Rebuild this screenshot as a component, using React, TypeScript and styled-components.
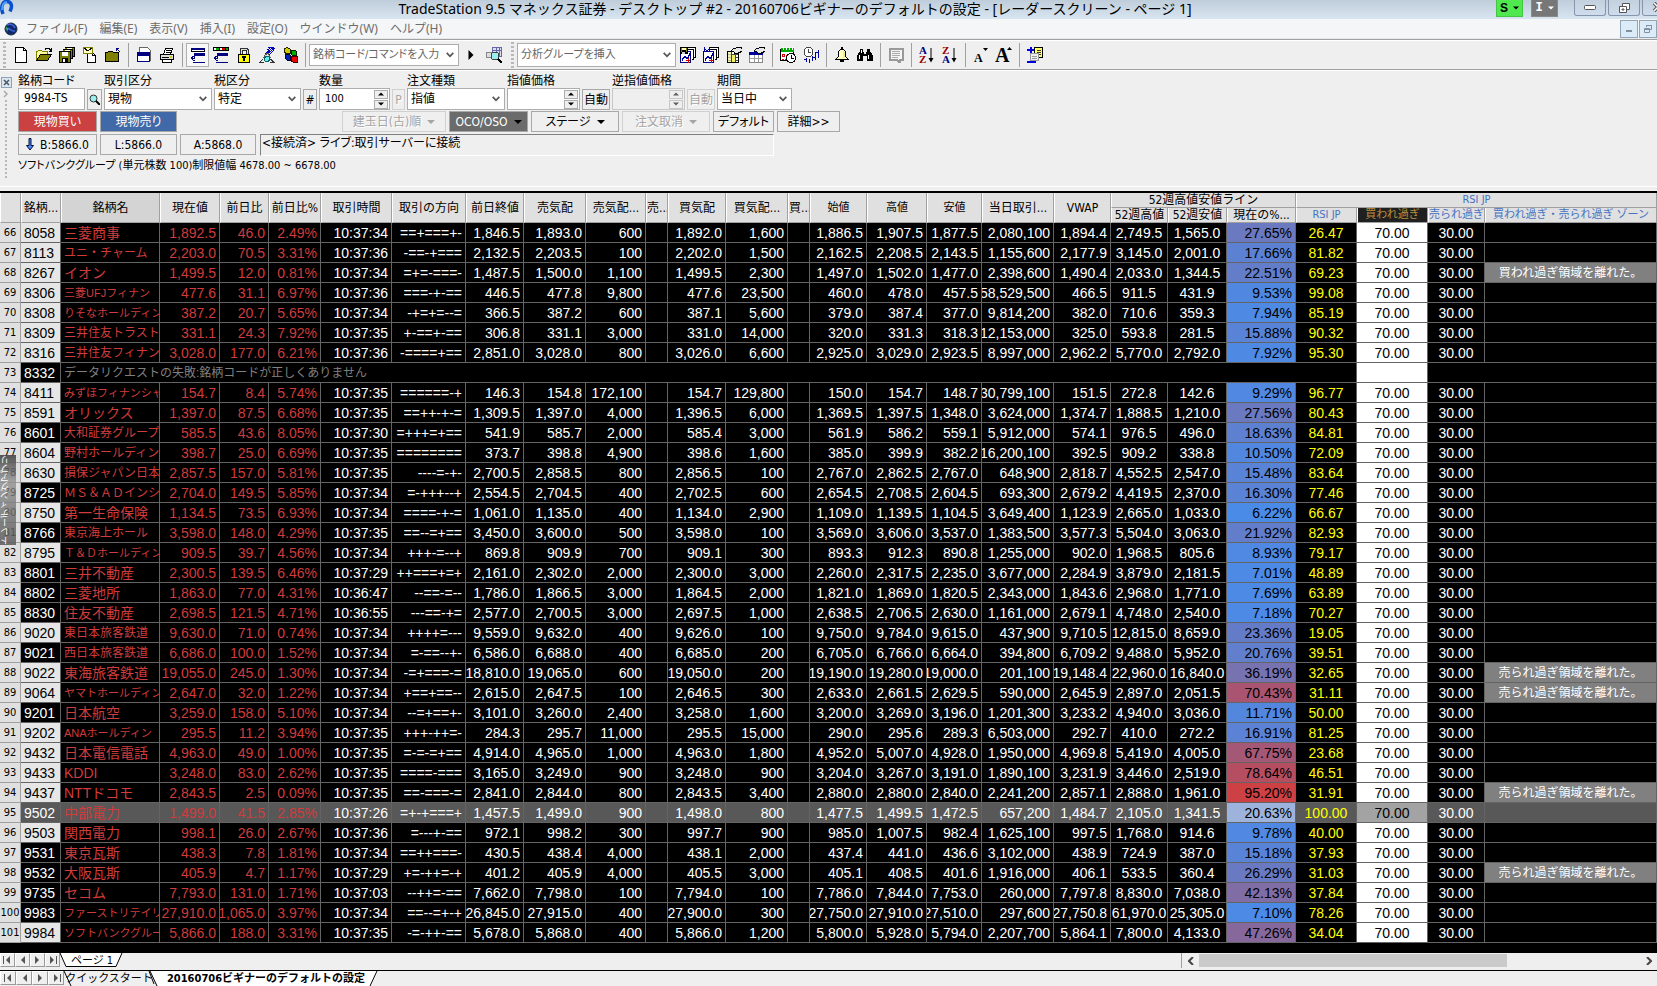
import React from 'react';
import styled, { createGlobalStyle, css } from 'styled-components';

const UI = '"DejaVu Sans Condensed", "Noto Sans", "Noto Sans CJK JP", sans-serif';
const GRID = '"Liberation Sans", "Noto Sans CJK JP", sans-serif';
const TITLE = '"Noto Sans", "Noto Sans CJK JP", sans-serif';

const GlobalStyle = createGlobalStyle`
  * { box-sizing: border-box; }
  body { margin: 0; background: #efefef; overflow: hidden; }
  button, input, select { font: inherit; color: inherit; margin: 0; padding: 0; border-radius: 0; }
`;

const Page = styled.div`
  display: flex;
  flex-direction: column;
  min-height: 100vh;
  font: 12px/14px ${UI};
  font-feature-settings: "palt";
  color: #000;
  white-space: nowrap;
`;

/* ---------- title and menu ---------- */

const TitleBar = styled.header`
  display: flex;
  align-items: flex-start;
  height: 19px;
  background: linear-gradient(#bfcddb, #d8e5f1);
`;

const Title = styled.h1`
  flex: 1;
  margin: 0;
  padding-left: 80px;
  text-align: center;
  font: 14px/18px ${TITLE};
`;

const BadgeButton = styled.button<{ $green?: boolean }>`
  display: flex;
  align-items: center;
  justify-content: center;
  gap: 5px;
  width: 27px;
  height: 17px;
  margin-right: 8px;
  border: 1px solid ${p => (p.$green ? '#45c545' : '#8a8a8a')};
  border-top: 0;
  background: ${p => (p.$green ? '#4fe84f' : '#777')};
  color: ${p => (p.$green ? '#000' : '#fff')};
  font: bold 12px/14px ${p => (p.$green ? GRID : '"Liberation Mono", monospace')};
`;

const WindowButtons = styled.div`
  display: flex;
  gap: 2px;
  margin-left: 8px;
  width: 83px;
  overflow: hidden;
`;

const WindowButton = styled.button`
  flex: none;
  width: 32px;
  height: 16px;
  border: 1px solid #8496ae;
  border-top: 0;
  border-radius: 0 0 3px 3px;
  background: linear-gradient(#c3d0de, #cfdceb);
  line-height: 0;
`;

const MenuBar = styled.nav`
  display: flex;
  align-items: center;
  height: 20px;
  padding-left: 4px;
  background: #f4f6f8;
  border-bottom: 1px solid #e6e9ea;
`;

const MenuLogo = styled.svg`
  margin-right: 8px;
`;

const MenuItem = styled.button`
  border: 0;
  background: none;
  margin-right: 12px;
  color: #6d6d6d;
  font: 12px/18px ${TITLE};
`;

const MdiButtons = styled.div`
  display: flex;
  gap: 1px;
  margin-left: auto;
`;

const MdiButton = styled.button`
  width: 18px;
  height: 18px;
  border: 1px solid #93a4b5;
  background: #dcebf8;
  line-height: 0;
`;

/* ---------- tool bar ---------- */

const ToolBar = styled.div`
  display: flex;
  align-items: center;
  height: 31px;
  border-top: 1px solid #a0a0a0;
  border-bottom: 1px solid #a0a0a0;
  box-shadow: inset 0 1px #fff, 0 1px #fff;
`;

const Grip = styled.span`
  width: 3px;
  height: 26px;
  margin: 0 3px;
  background: repeating-linear-gradient(#b8b8b8 0 2px, transparent 2px 4px);
`;

const ToolButton = styled.button<{ $on?: boolean }>`
  flex: none;
  display: flex;
  align-items: center;
  justify-content: center;
  width: 23px;
  height: 24px;
  border: 1px solid ${p => (p.$on ? '#b0b0b0' : 'transparent')};
  background: ${p => (p.$on ? '#f8f8f8' : 'none')};
`;

const Divider = styled.span`
  width: 8px;
  height: 24px;
  background: linear-gradient(#a0a0a0, #a0a0a0) center / 1px 100% no-repeat;
`;

const SelectWrap = styled.span<{ $w: number; $h: number; $tool?: boolean }>`
  position: relative;
  display: inline-block;
  width: ${p => p.$w}px;
  height: ${p => p.$h}px;
  color: ${p => (p.$tool ? '#666' : '#000')};
  font-size: ${p => (p.$tool ? 11 : 12)}px;
  svg { position: absolute; right: 5px; top: 50%; margin-top: -3px; pointer-events: none; }
`;

const SelectBox = styled.select`
  appearance: none;
  width: 100%;
  height: 100%;
  padding-left: 3px;
  border: 1px solid #adadad;
  background: #fff;
`;

/* ---------- order bar ---------- */

const OrderBar = styled.section`
  display: flex;
  height: 117px;
  border-bottom: 1px solid #fff;
  padding-top: 3px;
`;

const OrderHandle = styled.div`
  display: flex;
  flex-direction: column;
  align-items: center;
  gap: 2px;
  width: 12px;
  margin-right: 6px;
  padding-top: 4px;
  color: #a8a8a8;
`;

const CloseButton = styled.button`
  width: 11px;
  height: 11px;
  border: 1px solid #8da3b8;
  background: #dce6ee;
  line-height: 0;
`;

const HandleDots = styled.span`
  width: 2px;
  height: 78px;
  background: repeating-linear-gradient(#b8b8b8 0 2px, transparent 2px 4px);
`;

const OrderForm = styled.form`
  display: flex;
  flex-direction: column;
`;

const Fields = styled.div`
  display: flex;
  align-items: flex-end;
  gap: 2px;
  height: 37px;
`;

const Field = styled.label<{ $w: number }>`
  display: flex;
  flex-direction: column;
  width: ${p => p.$w}px;
`;

const TextBox = styled.input`
  width: 100%;
  height: 22px;
  padding: 0 5px 3px;
  border: 1px solid #adadad;
  background: #fff;
  font-size: 12px;
`;

const Spinner = styled.span<{ $off?: boolean }>`
  display: flex;
  align-items: center;
  height: 22px;
  border: 1px solid #adadad;
  padding-right: 1px;
  background: ${p => (p.$off ? '#efefef' : '#fff')};
  opacity: ${p => (p.$off ? 0.6 : 1)};
  input { flex: 1; min-width: 0; height: 18px; border: 0; background: none; padding: 0 5px 2px; font-size: 11px; }
`;

const SpinButtons = styled.span`
  display: flex;
  flex-direction: column;
  gap: 1px;
  button { display: flex; align-items: center; justify-content: center; width: 14px; height: 9px; border: 1px solid #adadad; background: #efefef; }
`;

const ButtonRow = styled.div`
  display: flex;
  gap: 3px;
  margin-top: 1px;
  height: 22px;
`;

const Space = styled.span<{ $w: number }>`
  width: ${p => p.$w}px;
`;

const PushButton = styled.button<{ $w: number; $tone?: 'red' | 'blue' | 'dark' }>`
  flex: none;
  display: flex;
  align-items: center;
  justify-content: center;
  gap: 6px;
  width: ${p => p.$w}px;
  height: 21px;
  border: 1px solid #a8a8a8;
  background: #efefef;
  &:disabled { color: #a5a5a5; border-color: #d0d0d0; text-shadow: 1px 1px #fff; }
  ${p => p.$tone && css`color: #fff; background: ${{ red: '#cb4040', blue: '#4169a8', dark: '#6b6b6b' }[p.$tone]};`}
`;

const Status = styled.output`
  width: 514px;
  margin-left: 1px;
  padding: 1px;
  border: 1px solid #fff;
  border-top-color: #808080;
  border-left-color: #808080;
`;

const Issue = styled.p`
  margin: 3px 0 0;
  font-size: 11px;
`;

/* ---------- radar screen grid ---------- */

const GridArea = styled.main`
  position: relative;
  margin-top: 4px;
  border-top: 2px solid #000;
  padding-bottom: 10px;
  background: #000;
`;

const GridTable = styled.table`
  width: 100%;
  table-layout: fixed;
  border-collapse: separate;
  border-spacing: 0;
`;

const Head = styled.th<{ $tone?: 'blue' | 'dark' | 'shade'; $small?: boolean }>`
  height: 15px;
  padding: 0;
  overflow: hidden;
  border-left: 1px solid #fff;
  border-right: 1px solid #a0a0a0;
  border-bottom: 1px solid #a0a0a0;
  background: #e0e0e0;
  font: ${p => (p.$small ? 11 : 12)}px/14px ${UI};
  ${p => p.$tone === 'blue' && css`color: #4472c4;`}
  ${p => p.$tone === 'shade' && css`background: #d4d4d4;`}
  ${p => p.$tone === 'dark' && css`color: #bb913c; background: #202020;`}
`;

const RowNumber = styled.th`
  height: 20px;
  padding: 0;
  border-right: 1px solid #a0a0a0;
  border-bottom: 1px solid #a0a0a0;
  background: #e0e0e0;
  font: 11px/19px ${UI};
  text-align: center;
`;

type Tone = 'red' | 'yellow' | 'ink' | 'gray' | 'plain';
const toneColors: Record<Tone, string> = { red: '#d03c3c', yellow: '#ff0', ink: '#000', gray: '#808080', plain: '#fff' };

const Cell = styled.td<{ $tone?: Tone; $bg?: string; $selected?: boolean }>`
  height: 20px;
  padding: 0;
  border-right: 1px solid #646464;
  border-bottom: 1px solid #646464;
  color: ${p => toneColors[p.$tone ?? 'plain']};
  background: ${p => p.$bg ?? (p.$selected ? '#585858' : '#000')};
  font: 14px/20px ${GRID};
`;

const Value = styled.div<{ $align: string; $size?: number }>`
  display: flex;
  justify-content: ${p => p.$align};
  height: 19px;
  padding: 0 3px;
  overflow: hidden;
  font-size: ${p => p.$size ?? 14}px;
`;

const SideTab = styled.button`
  position: absolute;
  left: 0;
  top: 262px;
  display: flex;
  align-items: flex-end;
  width: 16px;
  height: 90px;
  border: 0;
  background: linear-gradient(rgba(70, 70, 70, 0.9), rgba(140, 140, 140, 0.75) 30%, rgba(90, 90, 90, 0.85));
  color: #fff;
  font-size: 9px;
  line-height: 10px;
  span { writing-mode: vertical-rl; transform: rotate(180deg); }
`;

/* ---------- sheets ---------- */

const PageStrip = styled.footer`
  display: flex;
  height: 18px;
  background: #efefef;
  border-bottom: 1px solid #000;
`;

const DesktopStrip = styled.footer`
  display: flex;
  flex: 1;
  height: 15px;
  background: #efefef;
`;

const NavButton = styled.button<{ $w: number }>`
  width: ${p => p.$w}px;
  height: 14px;
  border: 1px solid;
  border-color: #fff #999 #999 #fff;
  background: #efefef;
  line-height: 0;
`;

const SheetTab = styled.button<{ $w: number; $active?: boolean }>`
  position: relative;
  width: ${p => p.$w}px;
  height: 15px;
  border: 0;
  background: none;
  font: ${p => (p.$active ? 'bold' : 'normal')} 11px/15px ${UI};
  svg { position: absolute; left: 0; top: 0; overflow: visible; }
  span { position: relative; }
`;

const ScrollTrack = styled.div`
  display: flex;
  align-items: center;
  width: 476px;
  margin-left: auto;
  height: 15px;
  border-left: 1px solid #a0a0a0;
  button { display: flex; justify-content: center; width: 17px; border: 0; background: none; }
`;

const ScrollThumb = styled.div`
  width: 308px;
  height: 13px;
  margin-right: auto;
  background: #cacaca;
`;

/* ---------- drawings ---------- */

const Ico = ({ children }: { children: React.ReactNode }) => (
  <svg width="16" height="16" viewBox="0 0 16 16" shapeRendering="crispEdges" aria-hidden="true">{children}</svg>
);
const Chevron = () => (
  <svg width="8" height="6" viewBox="0 0 8 6" aria-hidden="true"><path d="M0.7 0.8 4 4.3 7.3 0.8" fill="none" stroke="#555" strokeWidth="1.7" /></svg>
);
const Tri = ({ dir = 'down', size = 6, color = 'currentColor' }: { dir?: 'up' | 'down' | 'left' | 'right'; size?: number; color?: string }) => (
  <svg width={size} height={size} viewBox="0 0 8 8" aria-hidden="true">
    <path fill={color} d={{ up: 'M0 6 4 2 8 6z', down: 'M0 2h8L4 6z', left: 'M6 0v8L2 4z', right: 'M2 0v8l4-4z' }[dir]} />
  </svg>
);

const chartStack = (badge: React.ReactNode) => (
  <Ico>
    <path d="M6.5.5h9v10h-2v2h-2" fill="#fff" stroke="#000" />
    <path d="M4.5 2.500h9v10h-2" fill="#fff" stroke="#000" />
    <path d="M.5 4.500h10v11H.5z" fill="#fff" stroke="#000080" />
    <path d="M2 14v-3h1v-1h1v-1h1v1h1v1h1v-1h1V8h1V6" fill="none" stroke="#0000a0" />
    <path d="M8 11v5M6 13.500h4" stroke="#d00" />
    {badge}
  </Ico>
);

const handPage = <path d="M5 4l3-3h2l1-1h4v1h1v3h-2v1h-2v1H8V5z" fill="#e8e8e8" stroke="#000" />;

const icons: Record<string, React.ReactNode> = {
  new: <Ico><path d="M2.500.5h8l3 3v12h-11z" fill="#fff" stroke="#000" /><path d="M10.500.5v3h3" fill="none" stroke="#000" /></Ico>,
  open: <Ico><path d="M.5 13.500V4.500h1l1-1h3l1 1h5v3" fill="#ffffa0" stroke="#808000" /><path d="M.5 13.500l4-6h11l-4 6z" fill="#808000" stroke="#000" /><path d="M9 2.500l1-1h3l2 2M15.500 1v3h-3" fill="none" stroke="#000" /></Ico>,
  saveAll: <Ico><path d="M5.500.5h10v9h-2v2h-2" fill="#808000" stroke="#000" /><path d="M3.500 2.500h10v9h-3" fill="#808000" stroke="#000" /><path d="M.5 4.500h11v11H.5z" fill="#808000" stroke="#000" /><path d="M3 5h6v4H3zM8 1h5v1H8zM6 3h5v1H6z" fill="#fff" /><path d="M3 11h6v4H3z" fill="#000" /><path d="M4 12h2v3H4z" fill="#fff" /></Ico>,
  mailDoc: <Ico><path d="M5.500 5.500h5l3 3v7h-8z" fill="#fff" stroke="#000" /><path d="M10.500 5.500v3h3" fill="none" stroke="#000" /><path d="M1.500.5h9v6h-9z" fill="#ffffc0" stroke="#808000" /><path d="M2 1l4 3 4-3" fill="none" stroke="#000" /></Ico>,
  folder: <Ico><path d="M.5 14.500v-9h2l1-1h4l1 1h5v9z" fill="#808000" stroke="#000" /><path d="M11 1.500h3M11.500 1v3M12 2l3 3" fill="none" stroke="#000080" /></Ico>,
  window: <Ico><path d="M3.500.5h8l3 3v10h-11z" fill="#fff" stroke="#666" /><path d="M1.500 5.500h12v9h-12z" fill="#fff" stroke="#000080" /><path d="M1 5h13v4H1z" fill="#000080" /></Ico>,
  print: <Ico><path d="M4.500 7.500l2-6h7l-2 6" fill="#fff" stroke="#000" /><path d="M7 3.500h5M6.500 5.500h5" stroke="#000" /><path d="M1.500 7.500h13v5h-13z" fill="#ddd" stroke="#000" /><path d="M3.500 12.500h9v3h-9z" fill="#fff" stroke="#000" /><path d="M3 10h7" stroke="#000" /><path d="M11 9h2v2h-2z" fill="#cc0" /></Ico>,
  rowsBar: <Ico><path d="M1.500 1.500h13v3h-13z" fill="#fff" stroke="#000" /><path d="M1 1h14v2H1z" fill="#000080" /><path d="M4 6h11v3H4z" fill="#000080" /><path d="M3 15.500h12M4 8v3H1M4 9l-3 2 3 3M4 14v-1" fill="none" stroke="#000080" /></Ico>,
  rowsColor: <Ico><path d="M0 0h16v4H0z" fill="#000" /><path d="M1 1h2v2H1zM7 1h2v2H7z" fill="#fff" /><path d="M3 1h3v2H3zM13 1h2v2h-2z" fill="#00b000" /><path d="M9 1h3v2H9z" fill="#e00000" /><path d="M4 6h11v3H4z" fill="#000080" /><path d="M3 15.500h12M4 8v3H1M4 9l-3 2 3 3M4 14v-1" fill="none" stroke="#000080" /></Ico>,
  lock: <Ico><path d="M5 7V3l1-1h4l1 1v4" fill="none" stroke="#333" strokeWidth="3" /><path d="M5 7V3l1-1h4l1 1v4" fill="none" stroke="#ddd" /><path d="M2.500 7.500h11v8h-11z" fill="#ff0" stroke="#000" /><path d="M6 9h4v2H9v3H7v-3H6z" fill="#000" /></Ico>,
  satellite: <Ico><path d="M9 1l2-1M8 3l5-3M8 5l7-5M9 6l7-5M10 8l5-5M6 7l5-4" stroke="#0000c0" /><path d="M6 8l3-2 2 4H5z" fill="#ddd" stroke="#555" /><circle cx="8" cy="12" r="2.500" fill="#6ee" stroke="#066" /><path d="M0 15.500h5M4 12l-3 3M11 12l4 3M11 15.500h5" fill="none" stroke="#333" /></Ico>,
  blocks: <Ico><path d="M2.500 1.500l3-1 3 2v4h-4l-2-1z" fill="#cc0" stroke="#220" /><path d="M9.500 3.500h4l1 1v4h-4l-1-1z" fill="#0a0" stroke="#020" /><path d="M3.500 7.500h4l1 1v5h-3l-2-2z" fill="#0020c0" stroke="#002" /><path d="M9 9h6v6h-4l-2-1z" fill="#e00" stroke="#400" /></Ico>,
  lookup: <Ico><path d="M6.500.5h9v9h-9z" fill="#dde" stroke="#66a" /><path d="M7 3h8M10 1v8M13 1v8" stroke="#66a" /><path d="M0 5.500h6v5H0z" fill="#ddd" stroke="#888" /><circle cx="9" cy="9" r="4" fill="#9ee" stroke="#444" /><path d="M12 12l4 4" stroke="#000" strokeWidth="2" /></Ico>,
  chartSave: chartStack(<><path d="M0 0h8v7H0z" fill="#000" /><path d="M1 1h1v4H1zM6 1h1v4H6z" fill="#808000" /><path d="M2 1h4v2H2z" fill="#ffb" /><path d="M2 5h3v2H2z" fill="#ccc" /></>),
  chartMulti: chartStack(<path d="M1.500 5V0M1 1l3 3 3-3M6.500 0v5" fill="none" stroke="#0000a0" />),
  formatList: <Ico><path d="M1.500 4.500h11v11h-11z" fill="#fff" stroke="#000" /><path d="M2 7.500h10M2 10.500h10M2 13h10M5 5v10M9 5v10" stroke="#444" /><path d="M5.500 8h3v7h-3z" fill="#ee6" /><path d="M2 5h3v10H2z" fill="#ee9" opacity=".7" />{handPage}</Ico>,
  formatGrid: <Ico><path d="M.5 5.500h13v10H.5z" fill="#fff" stroke="#888" /><path d="M0 5h14v3H0z" fill="#0000a0" /><path d="M1 11.500h12M5 8v7M9 8v7" stroke="#999" />{handPage}</Ico>,
  calendar: <Ico><path d="M.5 2.500h13v11H.5z" fill="#fff" stroke="#000" /><path d="M1 1h13v4H1z" fill="#0a0" /><path d="M3 0v3M6 0v3M9 0v3M12 0v3" stroke="#fff" /><path d="M2.500 7.500h2v2h-2z" fill="none" stroke="#d00" /><path d="M2 12h2M5 12h2M6 8h2" stroke="#d00" /><circle cx="11" cy="11" r="4.500" fill="#fff" stroke="#000" /><path d="M11.500 8v3.500h2.500" fill="none" stroke="#000" /></Ico>,
  clockChart: <Ico><circle cx="5.500" cy="5" r="4.500" fill="#fff" stroke="#444" /><path d="M5.500 2v3.500h2.500" fill="none" stroke="#444" /><path d="M3.500 11v4M6.500 12v4M9.500 9v5M12.500 5v8M15 3v8" stroke="#0000a0" /><path d="M13 5.500h2M10 10.500h2M1 12.500h2" stroke="#0000a0" /></Ico>,
  bell: <Ico><path d="M1.500 12.500l3-3V5l2-3h3l2 3v4.500l3 3z" fill="#ffffc0" stroke="#000" /><path d="M7 0h2v2H7zM6 13h4v2H6z" fill="#000" /><path d="M9 4v7h2V6z" fill="#ee8" /></Ico>,
  find: <Ico><path d="M3 2h3v3h1v2h2V5h1V2h3v3h1l2 4v5h-6V9H6v5H0V9l2-4h1z" fill="#000" /><path d="M2.500 8v4M11.500 8v4M4.500 3v3" stroke="#fff" /></Ico>,
  note: <Ico><path d="M1.500 1.500h13v11h-3v3l-3-3h-7z" fill="#f4f4f4" stroke="#999" strokeWidth="2" /><path d="M4 4.500h8M4 6.500h8M4 8.500h8M4 10.500h6" stroke="#aaa" /></Ico>,
  plus: <Ico><path d="M7.500.5h8v10h-8z" fill="#ff6" stroke="#000" /><path d="M10 3h4M10 5h4M10 7h4" stroke="#333" /><path d="M3.500 6.500h8v7h-8z" fill="#eee" stroke="#999" /><path d="M5 9h5M5 11h5" stroke="#999" /><path d="M0 14.500h9M3.500 0v6M0 3h7" fill="none" stroke="#0000e0" strokeWidth="2" /></Ico>,
};

const SortGlyph = ({ a, b }: { a: string; b: string }) => (
  <svg width="16" height="18" viewBox="0 0 16 18" aria-hidden="true">
    <text x="0" y="8" fontFamily="Liberation Serif" fontWeight="700" fontSize="11" fill={a === 'A' ? '#000080' : '#900'}>{a}</text>
    <text x="0" y="17" fontFamily="Liberation Serif" fontWeight="700" fontSize="11" fill={b === 'A' ? '#000080' : '#900'}>{b}</text>
    <path d="M12 2v13" stroke="#000" /><path d="M9.500 12h5L12 16.500z" />
  </svg>
);
const FontGlyph = ({ up }: { up?: boolean }) => (
  <svg width="18" height="18" viewBox="0 0 18 18" aria-hidden="true">
    <text x={up ? 0 : 2} y="16" fontFamily="Liberation Serif" fontWeight="700" fontSize={up ? 20 : 12}>A</text>
    <path d={up ? 'M12 4l2.500-3 2.500 3z' : 'M11 2h5l-2.500 3z'} />
  </svg>
);

/* ---------- data ---------- */

const columnWidths = [21, 40, 99, 60, 49, 52, 71, 74, 58, 62, 60, 22, 58, 62, 22, 57, 60, 55, 72, 57, 57, 59, 69, 61, 71, 57];

const headings: [string, 'shade'?][] = [
  ['銘柄...'], ['銘柄名', 'shade'], ['現在値'], ['前日比'], ['前日比%'], ['取引時間'], ['取引の方向'], ['前日終値'], ['売気配'],
  ['売気配...'], ['売...'], ['買気配'], ['買気配...'], ['買...'], ['始値'], ['高値'], ['安値'], ['当日取引...'], ['VWAP'],
];

// code|dark code cell|name|last|net|net%|time|direction|prev|ask|ask size|bid|bid size|open|high|low|volume|vwap|52w high|52w low|52w %|rsi|zone
const quotes = `8058||三菱商事|1,892.5|46.0|2.49|10:37:34|==+===+-|1,846.5|1,893.0|600|1,892.0|1,600|1,886.5|1,907.5|1,877.5|2,080,100|1,894.4|2,749.5|1,565.0|27.65|26.47|
8113||ユニ・チャーム|2,203.0|70.5|3.31|10:37:36|-==-+===|2,132.5|2,203.5|100|2,202.0|1,500|2,162.5|2,208.5|2,143.5|1,155,600|2,177.9|3,145.0|2,001.0|17.66|81.82|
8267||イオン|1,499.5|12.0|0.81|10:37:34|=+=-===-|1,487.5|1,500.0|1,100|1,499.5|2,300|1,497.0|1,502.0|1,477.0|2,398,600|1,490.4|2,033.0|1,344.5|22.51|69.23|買われ過ぎ領域を離れた。
8306||三菱UFJフィナン|477.6|31.1|6.97|10:37:36|===-+-==|446.5|477.8|9,800|477.6|23,500|460.0|478.0|457.5|58,529,500|466.5|911.5|431.9|9.53|99.08|
8308||りそなホールディン|387.2|20.7|5.65|10:37:34|-+=+=--=|366.5|387.2|600|387.1|5,600|379.0|387.4|377.0|9,814,200|382.0|710.6|359.3|7.94|85.19|
8309||三井住友トラスト|331.1|24.3|7.92|10:37:35|+-==+-==|306.8|331.1|3,000|331.0|14,000|320.0|331.3|318.3|12,153,000|325.0|593.8|281.5|15.88|90.32|
8316||三井住友フィナン|3,028.0|177.0|6.21|10:37:36|-====+==|2,851.0|3,028.0|800|3,026.0|6,600|2,925.0|3,029.0|2,923.5|8,997,000|2,962.2|5,770.0|2,792.0|7.92|95.30|
8332|d|データリクエストの失敗:銘柄コードが正しくありません
8411||みずほフィナンシャ|154.7|8.4|5.74|10:37:35|======-+|146.3|154.8|172,100|154.7|129,800|150.0|154.7|148.7|30,799,100|151.5|272.8|142.6|9.29|96.77|
8591||オリックス|1,397.0|87.5|6.68|10:37:35|==++-+-=|1,309.5|1,397.0|4,000|1,396.5|6,000|1,369.5|1,397.5|1,348.0|3,624,000|1,374.7|1,888.5|1,210.0|27.56|80.43|
8601|d|大和証券グループ|585.5|43.6|8.05|10:37:30|=+++=+==|541.9|585.7|2,000|585.4|3,000|561.9|586.2|559.1|5,912,000|574.1|976.5|496.0|18.63|84.81|
8604||野村ホールディン|398.7|25.0|6.69|10:37:35|========|373.7|398.8|4,900|398.6|1,600|385.0|399.9|382.2|16,200,100|392.5|909.2|338.8|10.50|72.09|
8630||損保ジャパン日本|2,857.5|157.0|5.81|10:37:35|----=-+-|2,700.5|2,858.5|800|2,856.5|100|2,767.0|2,862.5|2,767.0|648,900|2,818.7|4,552.5|2,547.0|15.48|83.64|
8725|d|ＭＳ＆ＡＤインシ|2,704.0|149.5|5.85|10:37:34|=-+++--+|2,554.5|2,704.5|400|2,702.5|600|2,654.5|2,708.5|2,604.5|693,300|2,679.2|4,419.5|2,370.0|16.30|77.46|
8750||第一生命保険|1,134.5|73.5|6.93|10:37:34|====-+-=|1,061.0|1,135.0|400|1,134.0|2,900|1,109.0|1,139.5|1,104.5|3,649,400|1,123.9|2,665.0|1,033.0|6.22|66.67|
8766|d|東京海上ホール|3,598.0|148.0|4.29|10:37:35|==--=+==|3,450.0|3,600.0|500|3,598.0|100|3,569.0|3,606.0|3,537.0|1,383,500|3,577.3|5,504.0|3,063.0|21.92|82.93|
8795||Ｔ＆Ｄホールディン|909.5|39.7|4.56|10:37:34|+++-=--+|869.8|909.9|700|909.1|300|893.3|912.3|890.8|1,255,000|902.0|1,968.5|805.6|8.93|79.17|
8801|d|三井不動産|2,300.5|139.5|6.46|10:37:29|++===+=+|2,161.0|2,302.0|2,000|2,300.0|3,000|2,260.0|2,317.5|2,235.0|3,677,000|2,284.9|3,879.0|2,181.5|7.01|48.89|
8802|d|三菱地所|1,863.0|77.0|4.31|10:36:47|--==-=--|1,786.0|1,866.5|3,000|1,864.5|2,000|1,821.0|1,869.0|1,820.5|2,343,000|1,843.6|2,968.0|1,771.0|7.69|63.89|
8830|d|住友不動産|2,698.5|121.5|4.71|10:36:55|---==-+=|2,577.0|2,700.5|3,000|2,697.5|1,000|2,638.5|2,706.5|2,630.0|1,161,000|2,679.1|4,748.0|2,540.0|7.18|70.27|
9020||東日本旅客鉄道|9,630.0|71.0|0.74|10:37:34|++++=---|9,559.0|9,632.0|400|9,626.0|100|9,750.0|9,784.0|9,615.0|437,900|9,710.5|12,815.0|8,659.0|23.36|19.05|
9021|d|西日本旅客鉄道|6,686.0|100.0|1.52|10:37:34|=-==--+-|6,586.0|6,688.0|400|6,685.0|200|6,705.0|6,766.0|6,664.0|394,800|6,709.2|9,488.0|5,952.0|20.76|39.51|
9022||東海旅客鉄道|19,055.0|245.0|1.30|10:37:34|-=+===-=|18,810.0|19,065.0|600|19,050.0|200|19,190.0|19,280.0|19,000.0|201,100|19,148.4|22,960.0|16,840.0|36.19|32.65|売られ過ぎ領域を離れた。
9064||ヤマトホールディン|2,647.0|32.0|1.22|10:37:34|+==+==--|2,615.0|2,647.5|100|2,646.5|300|2,633.0|2,661.5|2,629.5|590,000|2,645.9|2,897.0|2,051.5|70.43|31.11|売られ過ぎ領域を離れた。
9201|d|日本航空|3,259.0|158.0|5.10|10:37:34|--=+==+-|3,101.0|3,260.0|2,400|3,258.0|1,600|3,200.0|3,269.0|3,196.0|1,201,300|3,233.2|4,940.0|3,036.0|11.71|50.00|
9202||ANAホールディン|295.5|11.2|3.94|10:37:35|+++-++=-|284.3|295.7|11,000|295.5|15,000|290.0|295.6|289.3|6,503,000|292.7|410.0|272.2|16.91|81.25|
9432||日本電信電話|4,963.0|49.0|1.00|10:37:35|=-=-=+==|4,914.0|4,965.0|1,000|4,963.0|1,800|4,952.0|5,007.0|4,928.0|1,950,000|4,969.8|5,419.0|4,005.0|67.75|23.68|
9433||KDDI|3,248.0|83.0|2.62|10:37:35|====-===|3,165.0|3,249.0|900|3,248.0|900|3,204.0|3,267.0|3,191.0|1,890,100|3,231.9|3,446.0|2,519.0|78.64|46.51|
9437||NTTドコモ|2,843.5|2.5|0.09|10:37:35|==-===-=|2,841.0|2,844.0|800|2,843.5|3,400|2,880.0|2,880.0|2,840.0|2,241,200|2,857.1|2,888.0|1,961.0|95.20|31.91|売られ過ぎ領域を離れた。
9502|s|中部電力|1,499.0|41.5|2.85|10:37:26|=+-+===+|1,457.5|1,499.0|900|1,498.0|800|1,477.5|1,499.5|1,472.5|657,200|1,484.7|2,105.0|1,341.5|20.63|100.00|
9503||関西電力|998.1|26.0|2.67|10:37:36|=---+-==|972.1|998.2|300|997.7|900|985.0|1,007.5|982.4|1,625,100|997.5|1,768.0|914.6|9.78|40.00|
9531|d|東京瓦斯|438.3|7.8|1.81|10:37:34|==++===-|430.5|438.4|4,000|438.1|2,000|437.4|441.0|436.6|3,102,000|438.9|724.9|387.0|15.18|37.93|
9532|d|大阪瓦斯|405.9|4.7|1.17|10:37:29|+=-++=-+|401.2|405.9|4,000|405.5|3,000|405.1|408.5|401.6|1,916,000|406.1|533.5|360.4|26.29|31.03|売られ過ぎ領域を離れた。
9735|d|セコム|7,793.0|131.0|1.71|10:37:03|--++=-==|7,662.0|7,798.0|100|7,794.0|100|7,786.0|7,844.0|7,753.0|260,000|7,797.8|8,830.0|7,038.0|42.13|37.84|
9983|d|ファーストリテイリン|27,910.0|1,065.0|3.97|10:37:34|==--=+-+|26,845.0|27,915.0|400|27,900.0|300|27,750.0|27,910.0|27,510.0|297,600|27,750.8|61,970.0|25,305.0|7.10|78.26|
9984||ソフトバンクグルー|5,866.0|188.0|3.31|10:37:35|-=-++-==|5,678.0|5,868.0|400|5,866.0|1,200|5,800.0|5,928.0|5,794.0|2,207,700|5,864.1|7,800.0|4,133.0|47.26|34.04|`
  .split('\n').map(line => line.split('|'));

// blue for a price near its 52 week low, shading to red near the high
const heat = (pct: number) => {
  const t = (pct - 6) / 89;
  return `rgb(${Math.round(75 + t * 130)}, ${Math.round(139 - t * 75)}, ${Math.round(232 - t * 165)})`;
};

// names too long for the column at the regular size are set smaller
const nameSize = (name: string) => (name.length < 7 ? 14 : name.length < 9 ? 12 : 11);

/* ---------- parts ---------- */

const Select = ({ w, h = 22, tool, children, label }: { w: number; h?: number; tool?: boolean; children: string; label?: string }) => (
  <SelectWrap $w={w} $h={h} $tool={tool}>
    <SelectBox aria-label={label}><option>{children}</option></SelectBox>
    <Chevron />
  </SelectWrap>
);

const Spin = ({ value = '', off, label }: { value?: string; off?: boolean; label: string }) => (
  <Spinner $off={off}>
    <input aria-label={label} defaultValue={value} disabled={off} />
    <SpinButtons>
      <button type="button" disabled={off} aria-label="増やす"><Tri dir="up" /></button>
      <button type="button" disabled={off} aria-label="減らす"><Tri /></button>
    </SpinButtons>
  </Spinner>
);

const Tools = ({ names, on }: { names: string[]; on?: string }) => (
  <>{names.map(n => <ToolButton key={n} aria-label={n} $on={n === on}>{icons[n]}</ToolButton>)}</>
);

const SheetNav = ({ w }: { w: number }) => (
  <>
    {(['first', 'left', 'right', 'last'] as const).map(k => (
      <NavButton key={k} $w={w} aria-label={k}>
        <svg width="9" height="8" viewBox="0 0 9 8" fill="#555" aria-hidden="true">
          {(k === 'first' || k === 'left') ? <path d="M7 0v8L3 4z" /> : <path d="M2 0v8l4-4z" />}
          {k === 'first' && <path d="M0 0h1v8H0z" />}
          {k === 'last' && <path d="M8 0h1v8H8z" />}
        </svg>
      </NavButton>
    ))}
  </>
);

const QuoteRow = ({ data, index }: { data: string[]; index: number }) => {
  const [code, flag, name, ...v] = data;
  const selected = flag === 's';
  const codeCell = (
    <Cell $tone={flag ? 'plain' : 'ink'} $bg={flag ? undefined : '#e6e6e6'} $selected={selected}>
      <Value $align="flex-start">{code}</Value>
    </Cell>
  );
  if (!v.length) {
    return (
      <tr>
        <RowNumber scope="row">{66 + index}</RowNumber>
        {codeCell}
        <Cell colSpan={22} $tone="gray"><Value $align="flex-start" $size={12}>{name}</Value></Cell>
        <Cell $bg="#fff" />
        <Cell colSpan={2} />
      </tr>
    );
  }
  const [last, net, pct, time, dir, prev, ask, askSize, bid, bidSize, open, high, low, vol, vwap, hi52, lo52, pct52, rsi, zone] = v;
  const right = (text: string, tone?: Tone) => <Cell $tone={tone} $selected={selected}><Value $align="flex-end">{text}</Value></Cell>;
  const mid = (text: string, tone?: Tone, bg?: string) => <Cell $tone={tone} $bg={bg} $selected={selected}><Value $align="center">{text}</Value></Cell>;
  return (
    <tr>
      <RowNumber scope="row">{66 + index}</RowNumber>
      {codeCell}
      <Cell $tone="red" $selected={selected}><Value $align="flex-start" $size={nameSize(name)}>{name}</Value></Cell>
      {right(last, 'red')}{right(net, 'red')}{right(`${pct}%`, 'red')}{right(time)}{right(dir)}{right(prev)}
      {right(ask)}{right(askSize)}{right('')}{right(bid)}{right(bidSize)}{right('')}
      {right(open)}{right(high)}{right(low)}{right(vol)}{right(vwap)}
      {mid(hi52)}{mid(lo52)}
      <Cell $tone="ink" $bg={selected ? '#9db3dc' : heat(Number(pct52))}><Value $align="flex-end">{pct52}%</Value></Cell>
      {mid(rsi, 'yellow')}
      {mid('70.00', 'ink', selected ? '#a3a3a3' : '#fff')}
      {mid('30.00')}
      <Cell $bg={zone ? '#808080' : undefined} $selected={selected}><Value $align="center" $size={12}>{zone}</Value></Cell>
    </tr>
  );
};

export default function App() {
  return (
    <Page>
      <GlobalStyle />
      <TitleBar>
        <svg width="14" height="17" viewBox="0 0 14 17" aria-hidden="true"><path d="M3 14C0 6 3 1 7 1.500c5 .5 5.500 5 3 10" fill="none" stroke="#0a4fd0" strokeWidth="3.500" /><path d="M2 10C2 5 4 2 7 2" fill="none" stroke="#5ab0ff" strokeWidth="1.500" /></svg>
        <Title>TradeStation 9.5 マネックス証券 - デスクトップ #2 - 20160706ビギナーのデフォルトの設定 - [レーダースクリーン - ページ 1]</Title>
        <BadgeButton $green>S<Tri /></BadgeButton>
        <BadgeButton>I<Tri /></BadgeButton>
        <WindowButtons>
          <WindowButton aria-label="最小化"><svg width="12" height="6"><rect x=".5" y=".5" width="11" height="4" rx="1" fill="#fff" stroke="#555" /></svg></WindowButton>
          <WindowButton aria-label="元に戻す"><svg width="13" height="12" fill="#fff" stroke="#555"><path d="M4.500 1.500h7v6h-7z" /><path d="M1.500 4.500h7v6h-7z" /><path d="M4 7h2v1H4z" /></svg></WindowButton>
          <WindowButton aria-label="閉じる"><svg width="12" height="11"><path d="M2 1l8 8M10 1L2 9" stroke="#555" strokeWidth="3.500" /><path d="M2 1l8 8M10 1L2 9" stroke="#fff" strokeWidth="1.500" /></svg></WindowButton>
        </WindowButtons>
      </TitleBar>
      <MenuBar>
        <MenuLogo width="14" height="14" viewBox="0 0 14 14" aria-hidden="true"><circle cx="7" cy="7" r="6" fill="#102a6c" stroke="#234" /><path d="M3 3c3-2 7 0 8 3M2 7c3-2 6 3 9 2" fill="none" stroke="#3c6ae0" strokeWidth="1.500" /><path d="M2 4l2 3-1 3z" fill="#4c4" /></MenuLogo>
        {['ファイル(F)', '編集(E)', '表示(V)', '挿入(I)', '設定(O)', 'ウインドウ(W)', 'ヘルプ(H)'].map(m => <MenuItem key={m}>{m}</MenuItem>)}
        <MdiButtons>
          <MdiButton aria-label="最小化"><svg width="8" height="8"><path d="M1 5h6v2H1z" fill="#8090a0" /></svg></MdiButton>
          <MdiButton aria-label="元に戻す"><svg width="10" height="10" fill="none" stroke="#8090a0"><path d="M3.500 3V1.500h5v4H7M3 1.500h6M1.500 4.500h5v4h-5zM1 5.500h6" /></svg></MdiButton>
        </MdiButtons>
      </MenuBar>

      <ToolBar>
        <Grip />
        <Tools names={['new', 'open', 'saveAll', 'mailDoc', 'folder']} />
        <Divider />
        <Tools names={['window', 'print']} />
        <Divider />
        <Tools names={['rowsBar', 'rowsColor', 'lock', 'satellite', 'blocks']} on="rowsBar" />
        <Divider />
        <Select w={150} tool label="銘柄コード/コマンド">銘柄コード/コマンドを入力</Select>
        <ToolButton aria-label="実行"><Tri dir="right" size={10} /></ToolButton>
        <Tools names={['lookup']} />
        <Space $w={3} />
        <Grip />
        <Select w={159} h={24} tool label="分析グループ">分析グループを挿入</Select>
        <Tools names={['chartSave', 'chartMulti', 'formatList', 'formatGrid']} />
        <Divider />
        <Tools names={['calendar', 'clockChart']} />
        <Divider />
        <Tools names={['bell', 'find']} />
        <Divider />
        <Tools names={['note']} />
        <Divider />
        <ToolButton aria-label="昇順"><SortGlyph a="A" b="Z" /></ToolButton>
        <ToolButton aria-label="降順"><SortGlyph a="Z" b="A" /></ToolButton>
        <Divider />
        <ToolButton aria-label="文字を小さく"><FontGlyph /></ToolButton>
        <ToolButton aria-label="文字を大きく"><FontGlyph up /></ToolButton>
        <Divider />
        <Tools names={['plus']} />
      </ToolBar>

      <OrderBar>
        <OrderHandle>
          <CloseButton aria-label="閉じる"><svg width="7" height="7"><path d="M1 1l5 5M6 1L1 6" stroke="#456" strokeWidth="1.500" /></svg></CloseButton>
          <svg width="6" height="8"><path d="M1 1l3 3-3 3" fill="none" stroke="#aaa" strokeWidth="1.500" /></svg>
          <HandleDots />
        </OrderHandle>
        <OrderForm onSubmit={e => e.preventDefault()}>
          <Fields>
            <Field $w={67}>銘柄コード<TextBox defaultValue="9984-TS" /></Field>
            <PushButton type="button" $w={15} aria-label="検索"><svg width="11" height="11"><circle cx="4.500" cy="4.500" r="3.500" fill="#9ee" stroke="#333" /><path d="M7 7l4 4" stroke="#000" strokeWidth="2" /></svg></PushButton>
            <Field $w={108}>取引区分<Select w={108}>現物</Select></Field>
            <Field $w={87}>税区分<Select w={87}>特定</Select></Field>
            <PushButton type="button" $w={14}>#</PushButton>
            <Field $w={71}>数量<Spin label="数量" value="100" /></Field>
            <PushButton type="button" $w={13} disabled>P</PushButton>
            <Field $w={98}>注文種類<Select w={98}>指値</Select></Field>
            <Field $w={73}>指値価格<Spin label="指値価格" /></Field>
            <PushButton type="button" $w={28}>自動</PushButton>
            <Field $w={73}>逆指値価格<Spin label="逆指値価格" off /></Field>
            <PushButton type="button" $w={28} disabled>自動</PushButton>
            <Field $w={75}>期間<Select w={75}>当日中</Select></Field>
          </Fields>
          <ButtonRow>
            <PushButton $w={79} $tone="red">現物買い</PushButton>
            <PushButton $w={77} $tone="blue">現物売り</PushButton>
            <Space $w={159} />
            <PushButton $w={104} disabled>建玉日(古)順<Tri size={8} /></PushButton>
            <PushButton $w={79} $tone="dark">OCO/OSO<Tri size={8} color="#000" /></PushButton>
            <PushButton $w={88}>ステージ<Tri size={8} /></PushButton>
            <PushButton $w={88} disabled>注文取消<Tri size={8} /></PushButton>
            <PushButton $w={61}>デフォルト</PushButton>
            <PushButton $w={63}>詳細&gt;&gt;</PushButton>
          </ButtonRow>
          <ButtonRow>
            <PushButton type="button" $w={79}><svg width="8" height="13"><path d="M3 .5h2v7h2.500L4 12 .5 7.500H3z" fill="#58f" stroke="#013" /></svg>B:5866.0</PushButton>
            <PushButton type="button" $w={77}>L:5866.0</PushButton>
            <PushButton type="button" $w={76}>A:5868.0</PushButton>
            <Status>&lt;接続済&gt; ライブ:取引サーバーに接続</Status>
          </ButtonRow>
          <Issue>ソフトバンクグループ (単元株数 100)制限値幅 4678.00 ~ 6678.00</Issue>
        </OrderForm>
      </OrderBar>

      <GridArea>
        <GridTable>
          <colgroup>
            {columnWidths.map((w, i) => <col key={i} width={w} />)}
            <col />
          </colgroup>
          <thead>
            <tr>
              <Head rowSpan={2} />
              {headings.map(([text, tone], i) => <Head key={i} rowSpan={2} $tone={tone} $small={text.length < 3}>{text}</Head>)}
              <Head colSpan={3}>52週高値安値ライン</Head>
              <Head colSpan={4} $tone="blue" $small>RSI JP</Head>
            </tr>
            <tr>
              <Head>52週高値</Head>
              <Head>52週安値</Head>
              <Head>現在の%...</Head>
              <Head $tone="blue" $small>RSI JP</Head>
              <Head $tone="dark" $small>買われ過ぎ</Head>
              <Head $tone="blue" $small>売られ過ぎ</Head>
              <Head $tone="blue" $small>買われ過ぎ・売られ過ぎ ゾーン</Head>
            </tr>
          </thead>
          <tbody>
            {quotes.map((q, i) => <QuoteRow key={q[0]} data={q} index={i} />)}
          </tbody>
        </GridTable>
        <SideTab><span>トレーディングアプリ</span></SideTab>
      </GridArea>

      <PageStrip>
        <SheetNav w={15} />
        <SheetTab $w={64}>
          <svg width="64" height="15"><path d="M0 0l6 13.500h50L62 0" fill="#fff" stroke="#000" /></svg>
          <span>ページ 1</span>
        </SheetTab>
        <ScrollTrack>
          <button aria-label="左へ"><svg width="6" height="8"><path d="M5 0L1 4l4 4" fill="none" stroke="#444" strokeWidth="2" /></svg></button>
          <ScrollThumb />
          <button aria-label="右へ"><svg width="6" height="8"><path d="M1 0l4 4-4 4" fill="none" stroke="#444" strokeWidth="2" /></svg></button>
        </ScrollTrack>
      </PageStrip>
      <DesktopStrip>
        <SheetNav w={16} />
        <SheetTab $w={90}>
          <svg width="90" height="15"><path d="M0 0l7 15M85 0l5 13" fill="none" stroke="#000" /></svg>
          <span>クイックスタート</span>
        </SheetTab>
        <SheetTab $w={224} $active>
          <svg width="224" height="15"><path d="M-4 0h228l-7 15H4z" fill="#fff" /><path d="M-4 0l7 15M223 0l-7 15" fill="none" stroke="#000" /></svg>
          <span>20160706ビギナーのデフォルトの設定</span>
        </SheetTab>
      </DesktopStrip>
    </Page>
  );
}
